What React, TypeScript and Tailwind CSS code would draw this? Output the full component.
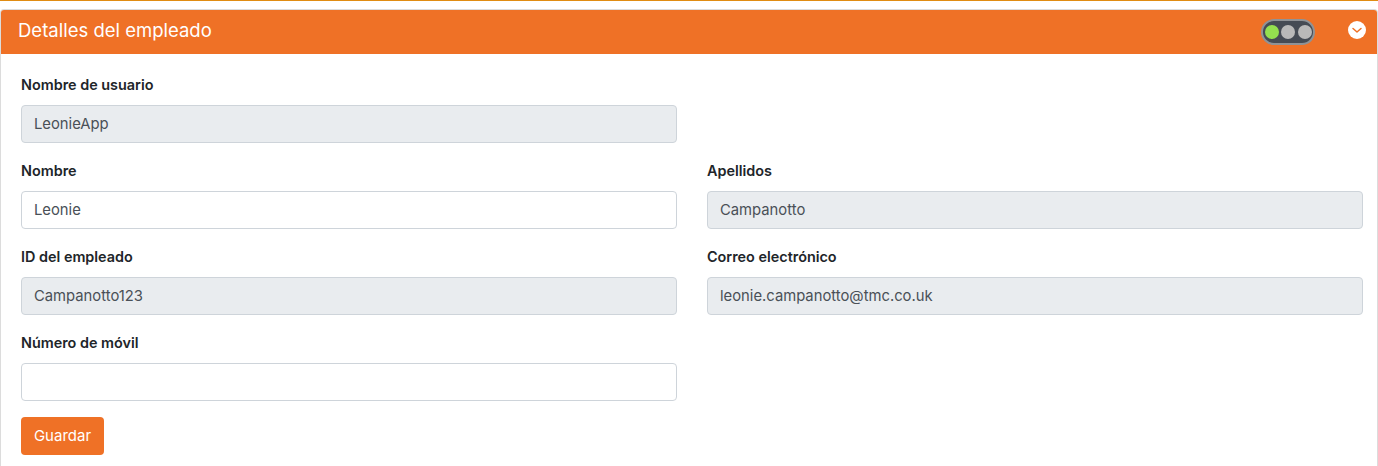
const inputBase =
  "block h-[38px] w-full rounded border border-[#ced4da] px-[12px] text-[14.8px] text-[#495057] outline-none";

type FieldProps = {
  label: string;
  value?: string;
  readOnly?: boolean;
};

function Field({ label, value = "", readOnly }: FieldProps) {
  return (
    <div className="h-[86px]">
      <label className="mb-[9px] block h-[23px] text-[14.4px] leading-[23px] font-semibold text-[#212529]">
        {label}
      </label>
      <input
        className={readOnly ? inputBase + " bg-[#e9ecef]" : inputBase + " bg-white"}
        defaultValue={value}
        readOnly={readOnly}
      />
    </div>
  );
}

function StatusLight() {
  return (
    <div className="flex h-[26px] w-[54px] items-center justify-center gap-[2.5px] rounded-full border-2 border-[#8f9296] bg-[#454b54]">
      <span className="h-[14px] w-[14px] rounded-full bg-[#94e04f]" />
      <span className="h-[14px] w-[14px] rounded-full bg-[#b9b9b9]" />
      <span className="h-[14px] w-[14px] rounded-full bg-[#b9b9b9]" />
    </div>
  );
}

export default function App() {
  return (
    <div className="h-[466px] overflow-hidden bg-white font-['Inter','Liberation_Sans',sans-serif]">
      <div className="h-px bg-[#e08c12]" />
      <div className="mt-2 h-[457px] rounded-t border border-b-0 border-[#dcdcdc]">
        <div className="flex h-[44px] items-center justify-between rounded-t-[3px] bg-[#ef7126] pl-[17px] pr-[11px]">
          <h2 className="-mt-[2px] text-[18.5px] font-normal text-white">Detalles del empleado</h2>
          <div className="flex items-center gap-[33px]">
            <StatusLight />
            <svg width="18" height="18" viewBox="0 0 18 18" className="-mt-[5px]">
              <circle cx="9" cy="9" r="9" fill="#ffffff" />
              <path d="M5 7.5 L9 11 L13 7.5" fill="none" stroke="#ef7126" strokeWidth="1.5" strokeLinecap="round" strokeLinejoin="round" />
            </svg>
          </div>
        </div>
        <div className="pl-[20px] pr-[14px] pt-[19px]">
          <div className="grid grid-cols-2 gap-x-[30px]">
            <Field label="Nombre de usuario" value="LeonieApp" readOnly />
            <div />
            <Field label="Nombre" value="Leonie" />
            <Field label="Apellidos" value="Campanotto" readOnly />
            <Field label="ID del empleado" value="Campanotto123" readOnly />
            <Field label="Correo electrónico" value="leonie.campanotto@tmc.co.uk" readOnly />
            <Field label="Número de móvil" />
          </div>
          <button
            type="button"
            className="h-[38px] w-[83px] rounded bg-[#ef7126] text-[15px] text-white"
          >
            Guardar
          </button>
        </div>
      </div>
    </div>
  );
}
